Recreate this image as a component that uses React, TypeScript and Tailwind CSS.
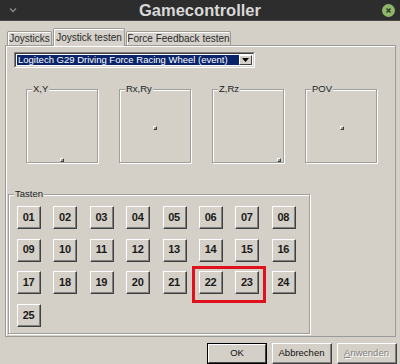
import React from "react";

const ui = { fontFamily: '"Liberation Sans", Arial, sans-serif' };

const buttons = Array.from({ length: 25 }, (_, i) => String(i + 1).padStart(2, "0"));

const axes = [
  { label: "X,Y", pos: "left-[33px] top-[68px]" },
  { label: "Rx,Ry", pos: "left-[33px] top-[36px]" },
  { label: "Z,Rz", pos: "left-[64px] top-[68px]" },
  { label: "POV", pos: "left-[34px] top-[36px]" },
];

function Marker({ pos }: { pos: string }) {
  return (
    <div
      className={`absolute ${pos} w-[4px] h-[4px] border-t border-l border-white border-r border-b border-r-[#404040] border-b-[#404040] bg-[#9a9a9a]`}
    />
  );
}

function RaisedButton({ label }: { label: string }) {
  return (
    <div className="w-[24px] h-[23px] border border-t-white border-l-white border-r-[#404040] border-b-[#404040] bg-[#d4d0c8]">
      <div className="w-full h-full border-r border-b border-r-[#808080] border-b-[#808080] flex items-center justify-center text-[11px] font-bold text-[#1a1a1a] tracking-[-0.3px]">
        {label}
      </div>
    </div>
  );
}

export default function App() {
  return (
    <div className="w-[400px] h-[364px] bg-[#d4d0c8] overflow-hidden flex flex-col" style={ui}>
      {/* title bar */}
      <div className="h-[21px] bg-[#2d2d2d] relative flex items-center justify-center border-b border-[#4a4a4a] shrink-0">
        <svg className="absolute left-[9px] top-[7px]" width="8" height="6" viewBox="0 0 8 6">
          <path d="M1 1.5 L4 4.5 L7 1.5" fill="none" stroke="#8a8a8a" strokeWidth="1.4" />
        </svg>
        <span className="text-[16.5px] font-bold text-[#d8d8d8] leading-none">Gamecontroller</span>
        <div className="absolute left-[382px] top-[4px] w-[13px] h-[13px] rounded-full bg-[#8db86a] flex items-center justify-center">
          <svg width="7" height="7" viewBox="0 0 7 7">
            <path d="M1.5 1.5 L5.5 5.5 M5.5 1.5 L1.5 5.5" stroke="#2f3a27" strokeWidth="1.5" />
          </svg>
        </div>
      </div>

      {/* tabs */}
      <div className="flex items-end pl-[7px] pt-[5px] h-[24px] shrink-0 text-[10px] text-[#2a2a2a] whitespace-nowrap">
        <div className="w-[45px] h-[14px] border border-b-0 border-[#9c9a95] rounded-t-[2px] flex items-center justify-center bg-[#d6d2cb] shadow-[inset_1px_1px_0_#fff]">
          Joysticks
        </div>
        <div className="ml-[1px] w-[72px] h-[18px] border border-b-0 border-[#9c9a95] rounded-t-[2px] flex items-center justify-center bg-[#d6d2cb] shadow-[inset_1px_1px_0_#fff] relative top-[1px]">
          Joystick testen
        </div>
        <div className="ml-[1px] w-[105px] h-[14px] border border-b-0 border-[#9c9a95] rounded-t-[2px] flex items-center justify-center bg-[#d6d2cb] shadow-[inset_1px_1px_0_#fff]">
          Force Feedback testen
        </div>
      </div>

      {/* panel */}
      <div className="ml-[5px] w-[391px] h-[292px] border border-[#9c9a95] shadow-[inset_1px_1px_0_#fff] shrink-0 flex flex-col">
        {/* dropdown */}
        <div className="ml-[8px] mt-[6px] w-[241px] h-[16px] border border-t-[#808080] border-l-[#808080] border-r-white border-b-white flex">
          <div className="flex-1 border border-t-[#404040] border-l-[#404040] border-r-[#d4d0c8] border-b-[#d4d0c8] bg-white p-[1px] flex">
            <div className="flex-1 bg-[#0a246a] text-white text-[9.5px] leading-none flex items-center pl-[1px] whitespace-nowrap overflow-hidden">
              Logitech G29 Driving Force Racing Wheel (event)
            </div>
            <div className="w-[13px] border border-t-white border-l-white border-r-[#404040] border-b-[#404040] bg-[#d4d0c8] flex items-center justify-center">
              <svg width="7" height="4" viewBox="0 0 7 4">
                <path d="M0 0 H7 L3.5 4 Z" fill="#000" />
              </svg>
            </div>
          </div>
        </div>

        {/* axes */}
        <div className="flex gap-[21px] ml-[20px] mt-[21px]">
          {axes.map((a) => (
            <div
              key={a.label}
              className="relative w-[72px] h-[74px] border border-[#a09e99] shadow-[inset_1px_1px_0_#fff,1px_1px_0_#fff]"
            >
              <span className="absolute left-[5px] -top-[6px] px-[1px] bg-[#d4d0c8] text-[9.5px] leading-none text-[#222]">
                {a.label}
              </span>
              <Marker pos={a.pos} />
            </div>
          ))}
        </div>

        {/* Tasten */}
        <div className="relative ml-[2px] mt-[31px] w-[302px] h-[140px] border border-[#a09e99] shadow-[inset_1px_1px_0_#fff,1px_1px_0_#fff]">
          <span className="absolute left-[5px] -top-[6px] px-[1px] bg-[#d4d0c8] text-[9.5px] leading-none text-[#222]">
            Tasten
          </span>
          <div className="grid grid-cols-[repeat(8,24px)] gap-x-[12.4px] gap-y-[9.7px] pl-[8px] pt-[11px]">
            {buttons.map((b) => (
              <RaisedButton key={b} label={b} />
            ))}
          </div>
          <div className="absolute left-[183px] top-[71px] w-[74px] h-[37px] border-[3px] border-[#e0101c]" />
        </div>
      </div>

      {/* bottom buttons */}
      <div className="flex justify-end gap-[5px] pr-[3px] mt-[6px] text-[9.5px]">
        <div className="w-[60px] h-[21px] border border-black">
          <div className="w-full h-full border border-t-white border-l-white border-r-[#404040] border-b-[#404040] flex items-center justify-center text-[#111]">
            OK
          </div>
        </div>
        <div className="w-[60px] h-[21px] border border-t-white border-l-white border-r-[#404040] border-b-[#404040]">
          <div className="w-full h-full border-r border-b border-r-[#808080] border-b-[#808080] flex items-center justify-center text-[#111]">
            Abbrechen
          </div>
        </div>
        <div className="w-[60px] h-[21px] border border-t-white border-l-white border-r-[#404040] border-b-[#404040]">
          <div className="w-full h-full border-r border-b border-r-[#808080] border-b-[#808080] flex items-center justify-center text-[#808080] [text-shadow:1px_1px_0_#fff]">
            <span>
              <span className="underline">A</span>nwenden
            </span>
          </div>
        </div>
      </div>
    </div>
  );
}
